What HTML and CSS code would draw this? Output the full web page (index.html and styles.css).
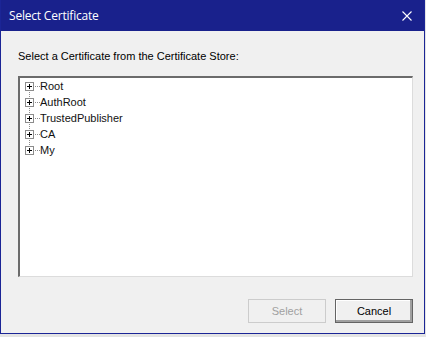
FILE: index.html
```html
<!DOCTYPE html>
<html>

<head>
  <title>Select Certificate</title>
  <link rel="stylesheet" href="styles.css">
</head>

<body>
  <div class="window">
    <div class="titlebar">
      <span class="title">Select Certificate</span>
      <!-- close glyph -->
      <svg class="close" viewBox="0 0 10 10">
        <path d="M0.5 0.5L9.5 9.5M9.5 0.5L0.5 9.5"></path>
      </svg>
    </div>

    <div class="client">
      <div class="prompt">Select a Certificate from the Certificate Store:</div>

      <ul class="tree">
        <li><span class="expander"></span><span class="connector"></span><span class="label">Root</span></li>
        <li><span class="expander"></span><span class="connector"></span><span class="label">AuthRoot</span></li>
        <li><span class="expander"></span><span class="connector"></span><span class="label">TrustedPublisher</span></li>
        <li><span class="expander"></span><span class="connector"></span><span class="label">CA</span></li>
        <li><span class="expander"></span><span class="connector"></span><span class="label">My</span></li>
      </ul>

      <div class="buttons">
        <button class="btn" disabled>Select</button>
        <button class="btn default">Cancel</button>
      </div>
    </div>
  </div>
</body>

</html>
```

FILE: styles.css
```css
/* Page around the dialog */
body {
  margin: 0;
  background-color: #e4e4e4;
  font-family: "Liberation Sans", Arial, sans-serif;
  font-size: 11px;
  color: #000;
}

/* Dialog frame */
.window {
  width: 425px;
  height: 334px;
  box-sizing: border-box;
  border: 1px solid #1b2596;
  border-top: none;
  background-color: #f0f0f0;
  display: flex;
  flex-direction: column;
}

/* Title bar */
.titlebar {
  height: 31px;
  flex: none;
  background-color: #19218c;
  color: #fff;
  display: flex;
  align-items: center;
  padding: 0 12px 0 8px;
}

.title {
  flex: 1;
  font-family: "Open Sans", "Noto Sans", sans-serif;
  font-size: 12px;
  letter-spacing: -0.2px;
}

.close {
  width: 10px;
  height: 10px;
  stroke: #fff;
  stroke-width: 1.1;
  fill: none;
}

/* Client area */
.client {
  flex: 1;
  display: flex;
  flex-direction: column;
  padding: 19px 11px 10px 17px;
}

.prompt {
  line-height: 13px;
  margin-bottom: 13px;
}

/* Tree view, sunken border */
.tree {
  list-style: none;
  margin: 0;
  padding: 0;
  width: 395px;
  height: 201px;
  box-sizing: border-box;
  background-color: #fff;
  border-style: solid;
  border-width: 2px 1px 1px 2px;
  border-color: #6b6b6b #dcdcdc #dcdcdc #6b6b6b;
}

.tree li {
  position: relative;
  height: 16px;
  display: flex;
  align-items: center;
  padding-left: 5px;
}

/* vertical dotted line to the next node */
.tree li:not(:last-child)::before {
  content: "";
  position: absolute;
  left: 9px;
  top: 12px;
  width: 1px;
  height: 8px;
  background-image: linear-gradient(to bottom, #8c8c8c 50%, transparent 50%);
  background-size: 1px 2px;
}

/* plus box */
.expander {
  position: relative;
  width: 9px;
  height: 9px;
  box-sizing: border-box;
  border: 1px solid #8c8c8c;
  background-color: #fff;
  flex: none;
}

.expander::before {
  content: "";
  position: absolute;
  left: 1px;
  top: 3px;
  width: 5px;
  height: 1px;
  background-color: #000;
}

.expander::after {
  content: "";
  position: absolute;
  left: 3px;
  top: 1px;
  width: 1px;
  height: 5px;
  background-color: #000;
}

/* horizontal dotted line to the label */
.connector {
  width: 5px;
  height: 1px;
  flex: none;
  margin-left: 1px;
  background-image: linear-gradient(to right, #8c8c8c 50%, transparent 50%);
  background-size: 2px 1px;
}

.label {
  line-height: 16px;
  color: #111;
}

/* Buttons row */
.buttons {
  display: flex;
  justify-content: flex-end;
  gap: 9px;
  margin-top: 22px;
}

.btn {
  width: 78px;
  height: 24px;
  font-family: "Liberation Sans", Arial, sans-serif;
  font-size: 11px;
  color: #000;
  background-color: #f0f0f0;
  border: 1px solid #adadad;
  padding: 0;
}

.btn:disabled {
  color: #a0a0a0;
  border-color: #cccccc;
}

/* default button: dark frame */
.btn.default {
  border: 1px solid #646464;
  box-shadow: inset -2px -2px 0 #a0a0a0, inset 1px 1px 0 #fff;
}
```
